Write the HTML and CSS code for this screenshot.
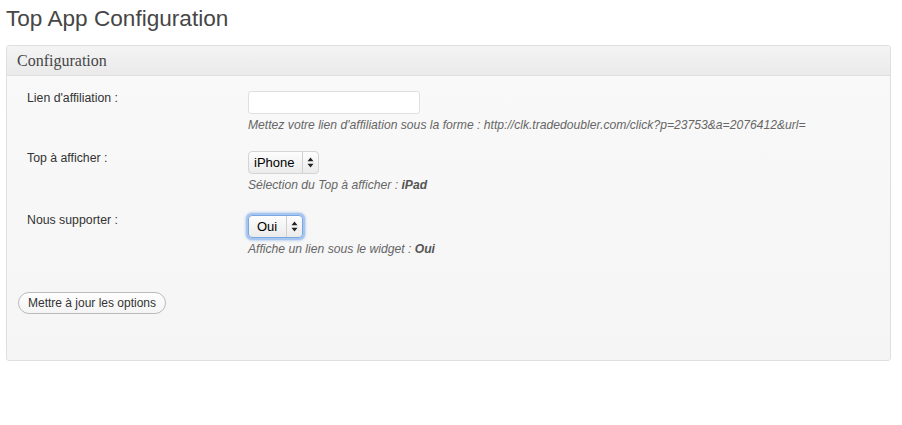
FILE: index.html
```html
<!DOCTYPE html>
<html lang="fr">
<head>
<meta charset="utf-8">
<link rel="stylesheet" href="styles.css">
</head>
<body>
<div class="wrap">
  <h2 class="page-title">Top App Configuration</h2>
  <div class="postbox">
    <h3 class="hndle">Configuration</h3>
    <div class="inside">
      <div class="row row1">
        <div class="label">Lien d'affiliation :</div>
        <div class="field">
          <input class="text" type="text">
          <p class="desc">Mettez votre lien d'affiliation sous la forme : http://clk.tradedoubler.com/click?p=23753&amp;a=2076412&amp;url=</p>
        </div>
      </div>
      <div class="row row2">
        <div class="label">Top à afficher :</div>
        <div class="field">
          <div class="select sel-iphone">
            <span class="val">iPhone</span>
            <span class="arrow"><svg width="7" height="11" viewBox="0 0 7 11"><path d="M3.5 0.5 L6.5 4.2 L0.5 4.2 Z M3.5 10.5 L6.5 6.8 L0.5 6.8 Z" fill="#222"/></svg></span>
          </div>
          <p class="desc">Sélection du Top à afficher : <b>iPad</b></p>
        </div>
      </div>
      <div class="row row3">
        <div class="label">Nous supporter :</div>
        <div class="field">
          <div class="select sel-oui focus">
            <span class="val">Oui</span>
            <span class="arrow"><svg width="7" height="11" viewBox="0 0 7 11"><path d="M3.5 0.5 L6.5 4.2 L0.5 4.2 Z M3.5 10.5 L6.5 6.8 L0.5 6.8 Z" fill="#222"/></svg></span>
          </div>
          <p class="desc">Affiche un lien sous le widget : <b>Oui</b></p>
        </div>
      </div>
      <div class="submit">
        <button class="button">Mettre à jour les options</button>
      </div>
    </div>
  </div>
</div>
</body>
</html>
```
FILE: styles.css
```css
html, body {
  margin: 0;
  padding: 0;
  background: #fff;
}
body {
  font-family: "Liberation Sans", Arial, sans-serif;
  font-size: 12px;
  color: #333;
}
.wrap {
  padding: 0 11px 0 6px;
}
.page-title {
  margin: 0;
  padding: 4px 0 0 0;
  height: 45px;
  box-sizing: border-box;
  font-size: 22.6px;
  line-height: 29px;
  font-weight: normal;
  color: #464646;
}
.postbox {
  border: 1px solid #dfdfdf;
  border-radius: 3px;
  background: linear-gradient(#f9f9f9, #f5f5f5);
  height: 316px;
  box-sizing: border-box;
}
.hndle {
  margin: 0;
  height: 30px;
  box-sizing: border-box;
  border-bottom: 1px solid #dfdfdf;
  background: linear-gradient(#f4f4f4, #eaeaea);
  border-radius: 3px 3px 0 0;
  padding: 5px 0 0 10px;
  font-family: "Liberation Serif", Georgia, serif;
  font-weight: normal;
  font-size: 16px;
  line-height: 20px;
  color: #464646;
}
.inside {
  padding: 15px 0 0 0;
}
.row {
  display: grid;
  grid-template-columns: 241px 1fr;
  align-items: start;
}
.label {
  padding-left: 20px;
  line-height: 16px;
  color: #333;
  font-size: 12.3px;
}
.row1 .label { margin-top: -1px; }
.row2 { margin-top: 18px; }
.row2 .label { margin-top: -1px; }
.row3 { margin-top: 20px; }
.row3 .label { margin-top: -1px; }
.field { display: flex; flex-direction: column; align-items: flex-start; }
.text {
  display: block;
  margin: 0;
  width: 172px;
  height: 23px;
  box-sizing: border-box;
  border: 1px solid #dfdfdf;
  border-radius: 3px;
  background: #fff;
  padding: 0 4px;
  outline: none;
}
.desc {
  margin: 3px 0 0 0;
  font-style: italic;
  color: #666;
  line-height: 16px;
  font-size: 12.15px;
}
.desc b { font-weight: bold; color: #555; }
.select {
  display: flex;
  align-items: stretch;
  height: 23px;
  box-sizing: border-box;
  border: 1px solid #d4d4d4;
  border-radius: 4px;
  background: linear-gradient(#fdfdfd, #ebebeb);
  color: #000;
  font-size: 13px;
}
.select .val {
  display: flex;
  align-items: center;
  border-right: 1px solid #d0d0d0;
}
.select .arrow {
  display: flex;
  align-items: center;
  justify-content: center;
  width: 15px;
}
.sel-iphone { width: 71px; }
.sel-iphone .val { width: 55px; box-sizing: border-box; padding: 0 0 0 5px; }
.sel-oui { width: 55px; margin-top: 2px; }
.sel-oui .val { width: 39px; box-sizing: border-box; padding: 0 0 0 8px; }
.focus {
  border-color: #7aa7e0;
  box-shadow: 0 0 0 2px #a6c6f0, 0 0 3px 2px #8bb3e8;
}
.submit {
  padding: 35px 0 0 11px;
}
.button {
  margin: 0;
  font-family: "Liberation Sans", Arial, sans-serif;
  font-size: 12px;
  color: #333;
  height: 22px;
  width: 148px;
  border: 1px solid #bbb;
  border-radius: 11px;
  background: linear-gradient(#fefefe, #f4f4f4);
  padding: 0;
  line-height: 20px;
}
```
